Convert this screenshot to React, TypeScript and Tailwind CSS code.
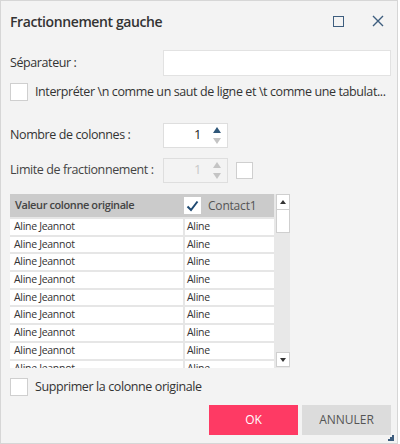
const rows = Array.from({ length: 9 }, () => ({ original: "Aline Jeannot", contact: "Aline" }))

function Box({ className = "" }: { className?: string }) {
  return <div className={`shrink-0 bg-white border border-[#cfcfcf] ${className}`} />
}

function Spinner({ disabled }: { disabled?: boolean }) {
  return (
    <div
      className={`flex h-[25px] w-[65px] shrink-0 items-center border ${
        disabled ? "border-[#dedede] bg-[#f3f3f3] text-[#c8c8c8]" : "border-[#dedede] bg-white text-[#222]"
      }`}
    >
      <span className="flex-1 pr-[6px] text-right text-[13px]">1</span>
      <div className="flex w-[20px] flex-col items-center gap-[5px]">
        <svg width="8" height="6" viewBox="0 0 8 6">
          <polygon points="4,0 8,6 0,6" fill={disabled ? "#c4c4c4" : "#2f5779"} />
        </svg>
        <svg width="8" height="6" viewBox="0 0 8 6">
          <polygon points="0,0 8,0 4,6" fill="#c4c4c4" />
        </svg>
      </div>
    </div>
  )
}

export default function App() {
  return (
    <div className="h-[444px] w-[400px] bg-white" style={{ fontFamily: "'Open Sans', 'Noto Sans', sans-serif" }}>
      <div className="flex h-[444px] w-[398px] flex-col border border-[#d6d6d6] bg-[#f3f3f3] text-[#333]">
        {/* Title bar */}
        <div className="flex h-[40px] items-center pl-[9px] pr-[12px]">
          <h1 className="flex-1 text-[14px] font-semibold tracking-[-0.4px] text-[#333]">Fractionnement gauche</h1>
          <div className="mr-[28px] h-[11px] w-[11px] border-[1.5px] border-[#3d5d7e]" />
          <svg width="12" height="12" viewBox="0 0 12 12" className="mr-[1px]">
            <path d="M1 1 L11 11 M11 1 L1 11" stroke="#3d5d7e" strokeWidth="1.4" />
          </svg>
        </div>

        <div className="flex flex-col pl-[9px] pr-[6px] text-[12.5px] tracking-[-0.4px]">
          {/* Separator */}
          <div className="mt-[9px] flex h-[26px] items-center">
            <span className="w-[153px] shrink-0">Séparateur :</span>
            <div className="h-[26px] flex-1 border border-[#e2e2e2] bg-white" />
          </div>

          <div className="mt-[7px] flex h-[18px] items-center">
            <Box className="h-[18px] w-[18px]" />
            <span className="ml-[7px] whitespace-nowrap">
              Interpréter \n comme un saut de ligne et \t comme une tabulat...
            </span>
          </div>

          {/* Nombre de colonnes */}
          <div className="mt-[21px] flex h-[26px] items-center">
            <span className="w-[153px] shrink-0">Nombre de colonnes :</span>
            <Spinner />
          </div>

          <div className="mt-[9px] flex h-[26px] items-center">
            <span className="w-[153px] shrink-0 text-[#444]">Limite de fractionnement :</span>
            <Spinner disabled />
            <Box className="ml-[8px] h-[17px] w-[17px]" />
          </div>

          {/* Grid */}
          <div className="mt-[11px] flex h-[174px] w-[280px] overflow-hidden tracking-normal">
            <div className="flex w-[264px] flex-col bg-[#e6e6e6]">
              <div className="flex h-[23px] shrink-0 items-center bg-[#cbcbcb]">
                <span className="w-[174px] pl-[5px] text-[11px] font-semibold tracking-[-0.4px] text-[#444]">
                  Valeur colonne originale
                </span>
                <div className="flex h-[17px] w-[17px] items-center justify-center bg-white">
                  <svg width="13" height="12" viewBox="0 0 13 12">
                    <path d="M1.5 6.5 L5 10 L11.5 1.5" stroke="#1f4a72" strokeWidth="2" fill="none" />
                  </svg>
                </div>
                <span className="ml-[7px] text-[12px] tracking-[-0.2px] text-[#555]">Contact1</span>
              </div>
              {rows.map((r, i) => (
                <div key={i} className="flex h-[17.7px] shrink-0 border-t-2 border-[#e6e6e6]">
                  <div className="w-[173px] bg-white pl-[4px] text-[10.5px] leading-[14px] tracking-[-0.3px] text-[#333]">
                    {r.original}
                  </div>
                  <div className="ml-[2px] flex-1 bg-white pl-[2px] text-[10.5px] leading-[14px] tracking-[-0.3px] text-[#333]">
                    {r.contact}
                  </div>
                </div>
              ))}
            </div>
            <div className="flex w-[16px] flex-col bg-[#e8e8e8] pl-[2px]">
              <div className="flex h-[16px] items-center justify-center border border-[#cfcfcf] bg-white">
                <svg width="6" height="4" viewBox="0 0 6 4">
                  <polygon points="3,0 6,4 0,4" fill="#333" />
                </svg>
              </div>
              <div className="h-[23px] border border-t-0 border-[#cfcfcf] bg-white" />
              <div className="flex-1" />
              <div className="mb-[1px] flex h-[15px] items-center justify-center border border-[#cfcfcf] bg-white">
                <svg width="6" height="4" viewBox="0 0 6 4">
                  <polygon points="0,0 6,0 3,4" fill="#333" />
                </svg>
              </div>
            </div>
          </div>

          <div className="mt-[10px] flex h-[18px] items-center">
            <Box className="h-[18px] w-[18px]" />
            <span className="ml-[7px]">Supprimer la colonne originale</span>
          </div>

          <div className="mt-[9px] flex justify-end gap-[4px] tracking-normal">
            <button className="h-[30px] w-[89px] bg-[#fe3a64] text-[12px] text-white">OK</button>
            <button className="h-[30px] w-[89px] bg-[#dcdcdc] text-[12px] text-[#555]">ANNULER</button>
          </div>
        </div>
        <div className="mt-auto flex justify-end pb-[2px] pr-[3px]">
          <svg width="6" height="6" viewBox="0 0 6 6">
            <rect x="4" y="0" width="2" height="2" fill="#3d5d7e" />
            <rect x="2" y="2" width="2" height="2" fill="#3d5d7e" />
            <rect x="4" y="2" width="2" height="2" fill="#3d5d7e" />
            <rect x="0" y="4" width="2" height="2" fill="#3d5d7e" />
            <rect x="2" y="4" width="2" height="2" fill="#3d5d7e" />
            <rect x="4" y="4" width="2" height="2" fill="#3d5d7e" />
          </svg>
        </div>
      </div>
    </div>
  )
}
